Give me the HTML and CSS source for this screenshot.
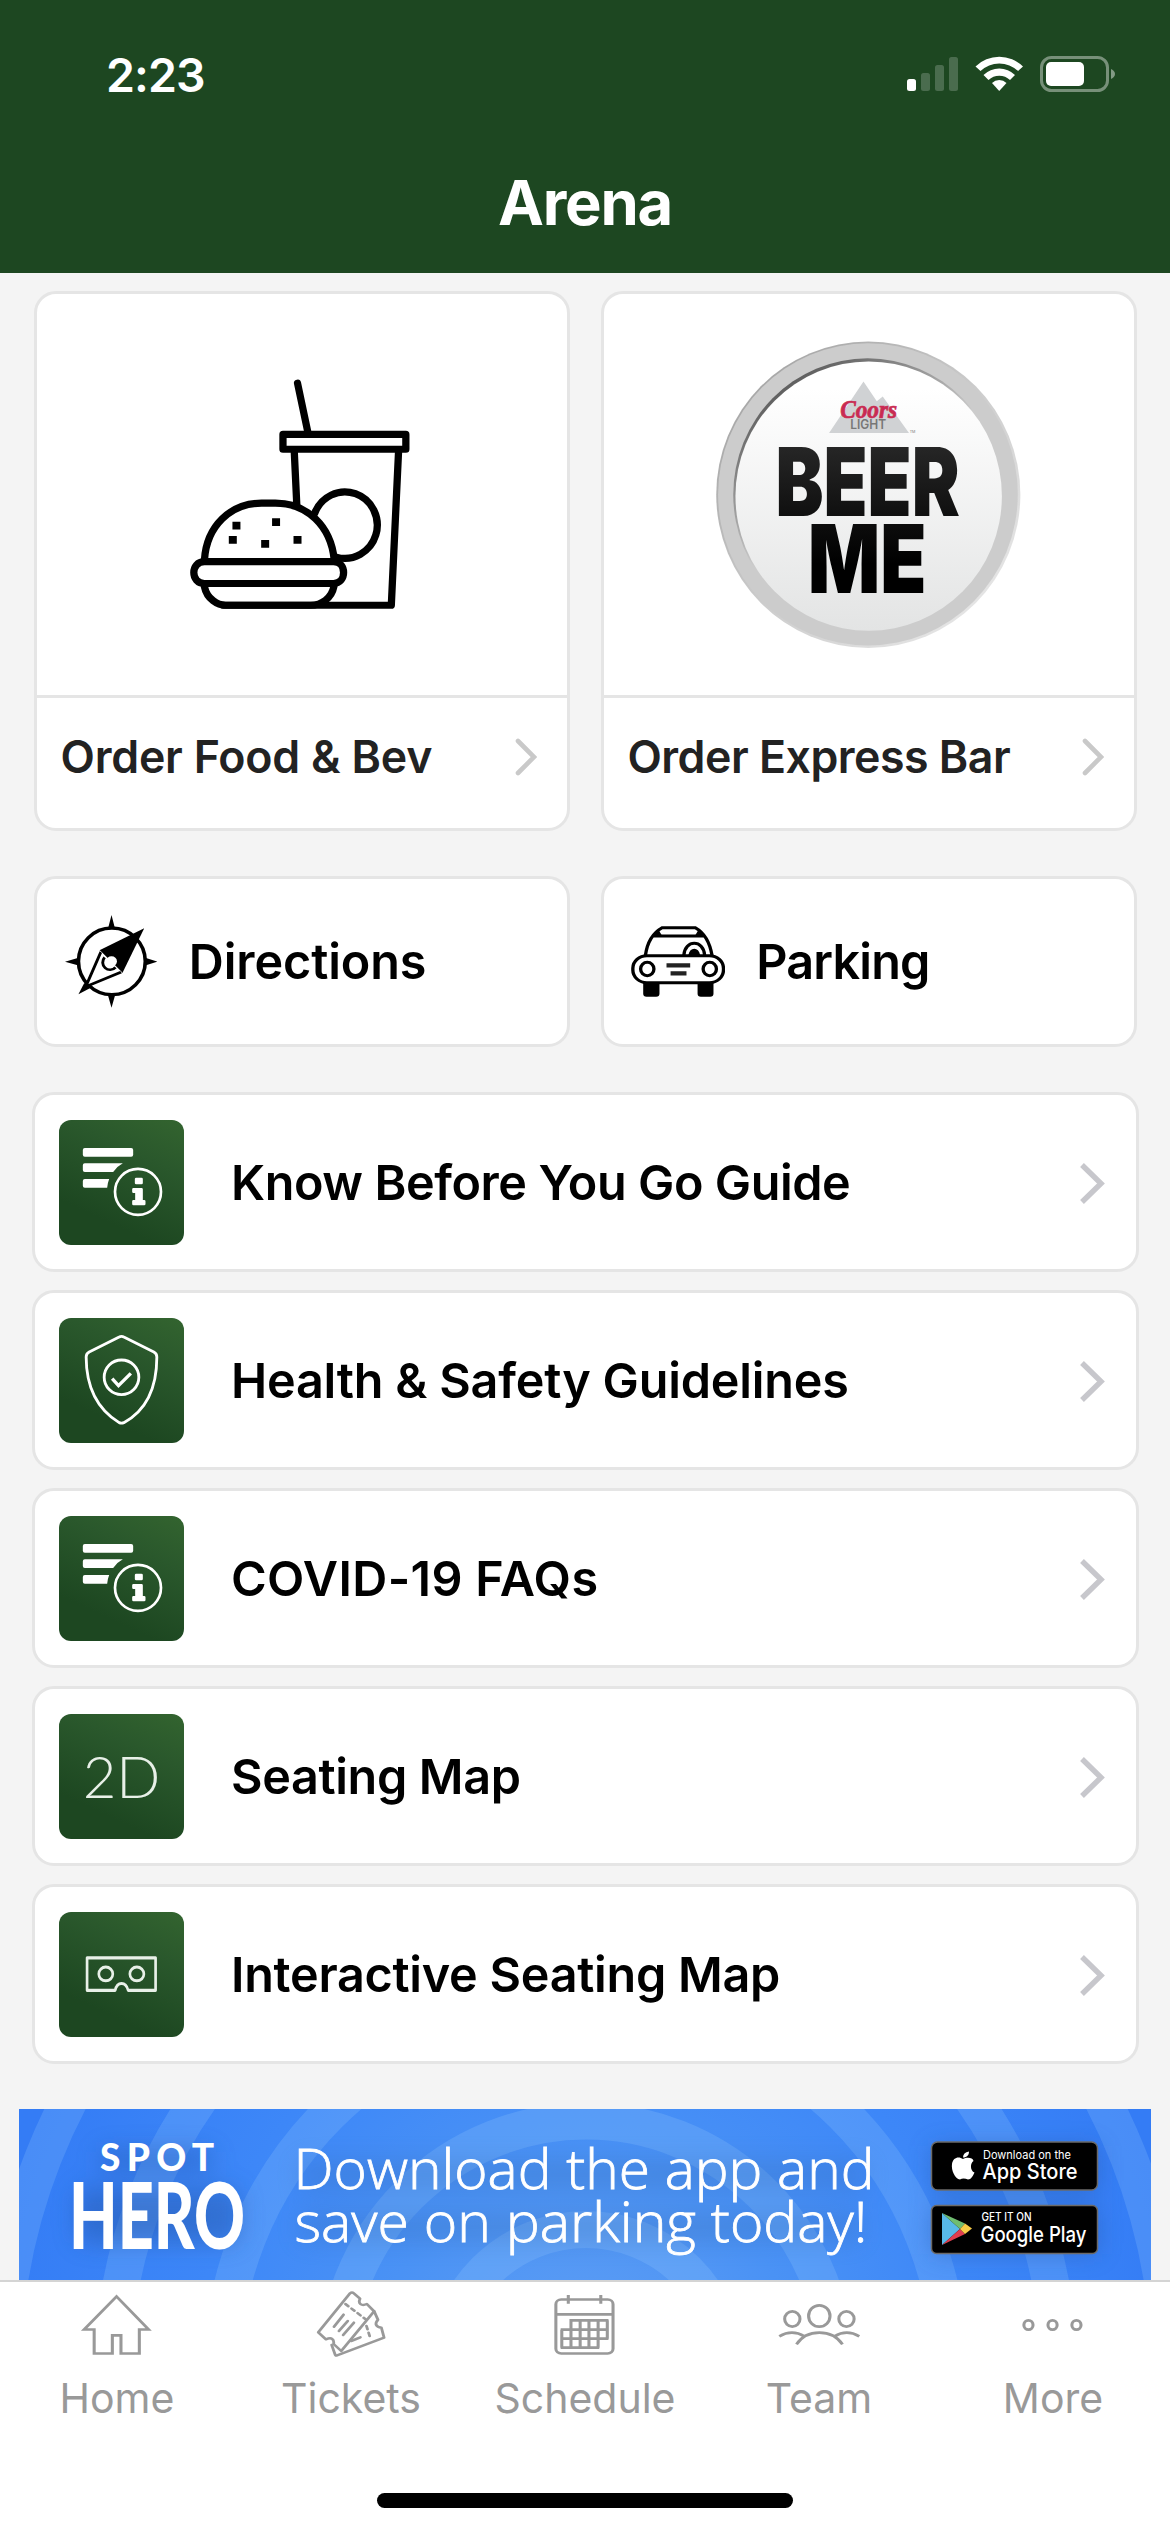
FILE: index.html
```html
<!DOCTYPE html>
<html lang="en">
<head>
<meta charset="utf-8">
<title>Arena</title>
<link rel="stylesheet" href="styles.css">
</head>
<body>
<svg class="defs" aria-hidden="true">
  <symbol id="chevron" viewBox="0 0 22 38"><path d="M3 3 L19 19 L3 35" fill="none" stroke="#c9c9c9" stroke-width="4.6" stroke-linecap="round" stroke-linejoin="miter"/></symbol>
  <symbol id="chevron-row" viewBox="0 0 25 41"><path d="M2 2 L21 20.500 L2 39" fill="none" stroke="#c7c7cc" stroke-width="5.4"/></symbol>
  <symbol id="info" viewBox="118 119 374 375">
    <g fill="#fff">
      <rect x="189" y="203" width="151" height="26" rx="6"/>
      <path d="M195 249H309Q292 258 280 275H195Q189 275 189 269V255Q189 249 195 249Z"/>
      <path d="M195 296H268Q263 309 262 322H195Q189 322 189 316V302Q189 296 195 296Z"/>
      <rect x="345" y="292" width="24" height="20" rx="4"/>
      <path d="M341 323H365Q369 323 369 327V359H373Q377 359 377 363V371Q377 375 373 375H341Q337 375 337 371V363Q337 359 341 359H346V338H341Q337 338 337 334V327Q337 323 341 323Z"/>
    </g>
    <circle cx="354.500" cy="334.500" r="69" fill="none" stroke="#fff" stroke-width="8"/>
  </symbol>
</svg>

<header class="header">
  <div class="status">
    <span class="time">2:23</span>
    <svg class="status-icons" viewBox="906 52 212 42">
      <g fill="#fff">
        <rect x="907" y="79" width="9" height="12" rx="2.500"/>
        <g opacity=".2"><rect x="921" y="73" width="9" height="18" rx="2.500"/><rect x="935" y="65" width="9" height="26" rx="2.500"/><rect x="949" y="57" width="9" height="34" rx="2.500"/></g>
        <path d="M975.500 66.500A34 34 0 0 1 1023 66.500L1018 71A27 27 0 0 0 980.500 71Z"/>
        <path d="M983.500 75A22.500 22.500 0 0 1 1015 75L1010 80A15.500 15.500 0 0 0 988.500 80Z"/>
        <path d="M992 83A10.500 10.500 0 0 1 1006.500 83L999.200 91Z"/>
        <rect x="1046" y="62" width="38" height="24" rx="5"/>
        <path opacity=".45" d="M1111 69Q1115 71 1115 74T1111 79Z"/>
      </g>
      <rect x="1041.500" y="57.500" width="66" height="33" rx="10" fill="none" stroke="#fff" stroke-opacity=".4" stroke-width="3"/>
    </svg>
  </div>
  <h1 class="title">Arena</h1>
</header>

<main class="content">
  <section class="pair">
    <a class="card">
      <div class="card-art">
        <svg class="food" viewBox="460 270 620 660" preserveAspectRatio="none" fill="none" stroke="#000" stroke-width="20" stroke-linecap="round" stroke-linejoin="round">
          <path d="M764 290L793 430"/>
          <path d="M724 433.500H1062V475H724Z"/>
          <path d="M755 480L762 630M1042 480L1022 912H560"/>
          <path d="M811 655A89 93 0 1 1 870 777"/>
          <path d="M508 785C514 690 580 626 665 626H703C790 626 856 690 865 785"/>
          <path d="M508 790H863C900 790 900 851 863 851H508C469 851 469 790 508 790Z"/>
          <path d="M508 860C515 895 545 912 566 912H800C830 912 858 892 864 860"/>
          <g fill="#000" stroke="none"><path d="M585 678h22v22h-22zM694 668h22v22h-22zM575 718h22v22h-22zM664 729h22v22h-22zM753 718h22v22h-22z"/></g>
        </svg>
      </div>
      <div class="card-label"><span class="order-food">Order Food &amp; Bev</span><svg class="chevron"><use href="#chevron"/></svg></div>
    </a>
    <a class="card">
      <div class="card-art">
        <svg class="beer" viewBox="336 164 834 872" preserveAspectRatio="none">
          <defs>
            <linearGradient id="face" x1="0" y1="0" x2="0" y2="1"><stop offset=".1" stop-color="#fff"/><stop offset="1" stop-color="#e3e4e4"/></linearGradient>
            <linearGradient id="edge" x1="0" y1="0" x2=".7" y2="1"><stop offset="0" stop-color="#333"/><stop offset=".55" stop-color="#ccc"/></linearGradient>
            <linearGradient id="rim" x1="0" y1="0" x2="1" y2="1"><stop offset="0" stop-color="#999"/><stop offset=".5" stop-color="#ccc"/><stop offset="1" stop-color="#eee"/></linearGradient>
            <linearGradient id="ink" gradientUnits="userSpaceOnUse" x1="0" y1="466" x2="0" y2="875"><stop offset="0" stop-color="#262626"/><stop offset=".8" stop-color="#000"/></linearGradient>
          </defs>
          <ellipse cx="753" cy="600" rx="411" ry="429" fill="url(#rim)"/>
          <ellipse cx="752" cy="599" rx="405" ry="423" fill="#ccc"/>
          <ellipse cx="751" cy="600" rx="363" ry="382" fill="url(#edge)"/>
          <ellipse cx="754" cy="604" rx="360" ry="377" fill="url(#face)"/>
          <path d="M647 427L740 283L776 338L792 325L863 427Z" fill="#d0d2d4"/>
          <text class="script" x="677" y="386" font-size="72" textLength="154" lengthAdjust="spacingAndGlyphs" fill="#c92b52" stroke="#c92b52" stroke-width="2">Coors</text>
          <text class="sans" x="704" y="417" font-size="35" font-weight="600" textLength="97" lengthAdjust="spacingAndGlyphs" fill="#777">LIGHT</text>
          <text class="sans" x="865" y="428" font-size="10" fill="#777">TM</text>
          <text class="sans" x="502" y="661" font-size="267" font-weight="900" textLength="498" lengthAdjust="spacingAndGlyphs" fill="url(#ink)">BEER</text>
          <text class="sans" x="590" y="875" font-size="267" font-weight="900" textLength="320" lengthAdjust="spacingAndGlyphs" fill="url(#ink)">ME</text>
        </svg>
      </div>
      <div class="card-label"><span class="order-bar">Order Express Bar</span><svg class="chevron"><use href="#chevron"/></svg></div>
    </a>
  </section>

  <section class="pair">
    <a class="quick">
      <svg class="compass" viewBox="123 170 254 278" preserveAspectRatio="none">
        <ellipse cx="252" cy="309" rx="92" ry="100" fill="none" stroke="#000" stroke-width="10"/>
        <path d="M251 170L260 208H242ZM251 448L241 410H261ZM123 310L158 299V321ZM377 310L346 299V321Z"/>
        <path d="M341 210L281 344L218 276Z"/>
        <path d="M222 280L180 385L278 341" fill="#fff" stroke="#000" stroke-width="8"/>
        <path d="M160 408L176 374L194 388Z"/>
        <path d="M218 276L281 344" stroke="#fff" stroke-width="2"/>
        <circle cx="251" cy="309" r="15" fill="#fff"/>
        <path d="M232 297A20 22 0 0 0 262 327" fill="none" stroke="#000" stroke-width="8"/>
      </svg>
      <span class="directions">Directions</span>
    </a>
    <a class="quick">
      <svg class="car" viewBox="110 200 256 218" preserveAspectRatio="none" fill="none" stroke="#000" stroke-width="9">
        <path d="M149 291C153 258 167 225 194 208H284C311 225 324 258 329 291M170 233H307" />
        <path d="M172 231L184 218L190 229ZM305 231L293 218L287 229Z" fill="#000" stroke-width="4"/>
        <rect x="115" y="292" width="245" height="81" rx="38"/>
        <ellipse cx="154" cy="332" rx="18" ry="20"/><ellipse cx="323" cy="332" rx="18" ry="20"/>
        <path d="M253 290C256 243 306 243 309 290"/>
        <path d="M265 290Q269 271 281 271T297 290Z" fill="#000" stroke="none"/>
        <path d="M206 321H270M217 345H260" stroke="#222" stroke-width="13"/>
        <path d="M143 374H187V406Q187 415 178 415H152Q143 415 143 406ZM290 374H333V406Q333 415 324 415H299Q290 415 290 406Z" fill="#000" stroke="none"/>
      </svg>
      <span class="parking">Parking</span>
    </a>
  </section>

  <nav class="list">
    <a class="row"><span class="tile"><svg><use href="#info"/></svg></span><span class="row-text know">Know Before You Go Guide</span><svg class="chevron"><use href="#chevron-row"/></svg></a>
    <a class="row"><span class="tile"><svg viewBox="118 713 374 375" fill="none" stroke="#fff" stroke-width="8.500" stroke-linecap="round" stroke-linejoin="round"><path d="M298 770Q305 766 312 770L402 815Q411 820 411 830C411 920 380 990 312 1027Q305 1030 298 1027C230 985 199 920 199 830Q199 820 208 815Z"/><circle cx="305" cy="891" r="52"/><path d="M277 895L296 916L333 879" stroke-width="10" stroke-linecap="butt" stroke-linejoin="miter"/></svg></span><span class="row-text health">Health &amp; Safety Guidelines</span><svg class="chevron"><use href="#chevron-row"/></svg></a>
    <a class="row"><span class="tile"><svg><use href="#info"/></svg></span><span class="row-text covid">COVID-19 FAQs</span><svg class="chevron"><use href="#chevron-row"/></svg></a>
    <a class="row"><span class="tile two-d">2D</span><span class="row-text seating">Seating Map</span><svg class="chevron"><use href="#chevron-row"/></svg></a>
    <a class="row"><span class="tile"><svg viewBox="118 1128 374 327" preserveAspectRatio="none" fill="none" stroke="#e8f0e8" stroke-width="8" stroke-linejoin="round"><path d="M202 1248H407V1333H325C318 1309 292 1309 286 1333H202Z"/><ellipse cx="258" cy="1290" rx="21" ry="18"/><ellipse cx="351" cy="1290" rx="21" ry="18"/></svg></span><span class="row-text interactive">Interactive Seating Map</span><svg class="chevron"><use href="#chevron-row"/></svg></a>
  </nav>

  <svg class="banner" viewBox="19 2109 1132 171">
    <defs>
      <radialGradient id="sky" gradientUnits="userSpaceOnUse" cx="586" cy="2371" r="600"><stop offset="0" stop-color="#609ff4"/><stop offset=".35" stop-color="#4a92f5"/><stop offset=".65" stop-color="#3d87f8"/><stop offset="1" stop-color="#347cf5"/></radialGradient>
      <filter id="soft" x="-30%" y="-40%" width="160%" height="180%"><feGaussianBlur stdDeviation="12"/></filter>
    </defs>
    <rect x="19" y="2109" width="1132" height="171" fill="url(#sky)"/>
    <g fill="none" stroke="#a0d0ff" stroke-opacity=".2" stroke-width="37"><circle cx="586" cy="2371.600" r="142"/><circle cx="586" cy="2371.600" r="250.500"/><circle cx="586" cy="2371.600" r="364"/><circle cx="586" cy="2371.600" r="473"/><circle cx="586" cy="2371.600" r="583.500"/></g>
    <g fill="#204f9c" opacity=".4" filter="url(#soft)"><rect x="76" y="2188" width="164" height="56" rx="10"/><rect x="100" y="2150" width="112" height="20"/><rect x="932" y="2146" width="166" height="46"/><rect x="932" y="2208" width="166" height="46"/></g>
    <g fill="#315f9f" opacity=".22" filter="url(#soft)"><rect x="300" y="2160" width="566" height="30"/><rect x="300" y="2212" width="560" height="30"/></g>
    <g fill="#fff">
      <text class="heavy" x="100" y="2171" font-size="37" textLength="114" lengthAdjust="spacing">SPOT</text>
      <text class="heavy" x="69" y="2249" font-size="91" textLength="176" lengthAdjust="spacingAndGlyphs">HERO</text>
      <g stroke="#fff" stroke-width=".8">
        <text class="light" x="293.500" y="2188.700" font-size="55" textLength="581" lengthAdjust="spacingAndGlyphs">Download the app and</text>
        <text class="light" x="294.500" y="2241.700" font-size="55" textLength="573" lengthAdjust="spacingAndGlyphs">save on parking today!</text>
      </g>
    </g>
    <rect x="931.500" y="2142" width="166" height="48" rx="6" stroke="#6b6a68" stroke-width="1.500"/>
    <rect x="931.500" y="2205.500" width="166" height="48" rx="5" stroke="#6b6a68" stroke-width="1.500"/>
    <path fill="#fff" d="M963 2159C966 2157 973 2157 973.500 2161C970 2163 970 2171 974.500 2172.500C973 2176 971 2179.500 968 2179.500C965 2178 962 2178 960 2179.500C955 2179 951 2170 952 2164C953 2157 959 2156 963 2159ZM963 2157.500C963 2154 965 2152 969 2151.500C969 2155 967 2157.500 963 2157.500Z"/>
    <path fill="#58b9e8" d="M942 2213V2245L960 2229Z"/><path fill="#70bd71" d="M942 2213L965 2223.500L960 2229Z"/><path fill="#df3e50" d="M942 2245L965 2234L960 2229Z"/><path fill="#f8cb46" d="M965 2223.500L972 2228.500L965 2234L960 2229Z"/>
    <g class="sans" fill="#fff">
      <text x="983" y="2159" font-size="11.500" textLength="88" lengthAdjust="spacingAndGlyphs">Download on the</text>
      <text x="982.500" y="2178.500" font-size="21" font-weight="500" textLength="95" lengthAdjust="spacingAndGlyphs">App Store</text>
      <text x="981.500" y="2220.500" font-size="11.500" font-weight="500" textLength="50" lengthAdjust="spacingAndGlyphs">GET IT ON</text>
      <text x="980.500" y="2242" font-size="22" font-weight="500" textLength="106" lengthAdjust="spacingAndGlyphs">Google Play</text>
    </g>
  </svg>
</main>

<footer class="tabs">
  <nav class="tab-row">
    <a class="tab"><svg width="73.500" height="68" viewBox="210 60 192 204" preserveAspectRatio="none" stroke-width="8"><path d="M305.500 79.500L389 178.500H365V250.500H317V196H294.500V250.500H247V178.500H221Z"/></svg><span>Home</span></a>
    <a class="tab"><svg width="70.400" height="68" viewBox="825 60 184 204" preserveAspectRatio="none" stroke-width="7.500" stroke-linejoin="round" stroke-linecap="round"><path d="M914 70Q919 65 924 70L940 86C934 101 944 109 958 102L977 124L891 243L871 222C873 207 866 201 851 208L831 187Z"/><path d="M977 124L987 149C977 162 982 171 996 173L1003 203L880 256Q876 258 875 254L866 225M917 213L941 202"/><path d="M902 102L955 148M957 168L968 208" stroke-dasharray="10 11"/><path d="M897 134L872 170M908 153L885 183M924 158L896 195"/></svg><span>Tickets</span></a>
    <a class="tab"><svg width="63.100" height="68" viewBox="-43 60 165 204" preserveAspectRatio="none" stroke-width="8"><rect x="-35.500" y="88.500" width="149.500" height="162" rx="14"/><path d="M-35 133H114M-3 75V101M82 75V101M0 151H102M-23 179H102M-23 206H102M-23 233H78M-20 179V233M4 151V233M28 151V233M51 151V233M75 151V233M99 151V206"/></svg><span>Schedule</span></a>
    <a class="tab"><svg width="84.600" height="68" viewBox="540 60 221 204" preserveAspectRatio="none" stroke-width="8"><ellipse cx="650.500" cy="138" rx="28" ry="32"/><ellipse cx="580" cy="147" rx="20" ry="23"/><ellipse cx="721.500" cy="147" rx="20" ry="23"/><path d="M591 223C618 176 683 176 711 223M546 199Q579 177 612 199M755 199Q722 177 690 199"/></svg><span>Team</span></a>
    <a class="tab"><svg width="63.100" height="68" viewBox="1180 60 165 204" preserveAspectRatio="none" stroke-width="8"><ellipse cx="1199.500" cy="165" rx="12" ry="14"/><ellipse cx="1262.500" cy="165" rx="12" ry="14"/><ellipse cx="1325" cy="165" rx="12" ry="14"/></svg><span>More</span></a>
  </nav>
  <div class="home-indicator"></div>
</footer>
</body>
</html>
```

FILE: styles.css
```css
* { box-sizing: border-box; }
body { margin: 0; width: 1170px; height: 2532px; overflow: hidden; background: #f4f4f4; font-family: Inter, "Liberation Sans", sans-serif; color: #000; display: flex; flex-direction: column; }
svg { display: block; flex: none; }
.defs { position: absolute; width: 0; height: 0; }

.header { height: 273px; flex: none; background: #1d4721; color: #fff; }
.status { height: 146px; padding: 52px 52px 0 106px; display: flex; justify-content: space-between; align-items: flex-start; }
.time { font-size: 46.500px; font-weight: 600; line-height: 46px; letter-spacing: -.9px; }
.status-icons { width: 212px; height: 42px; }
.title { margin: 0; text-align: center; font-size: 61.500px; font-weight: 700; line-height: 114px; letter-spacing: -1.200px; }

.content { flex: none; height: 2007px; padding-top: 18px; display: flex; flex-direction: column; }
.pair { display: grid; grid-template-columns: 1fr 1fr; gap: 31px; padding: 0 33.500px; margin-bottom: 45px; }
.card, .quick, .row { background: #fff; border: 3px solid #e5e5e5; border-radius: 22px; display: flex; }
.card { height: 540px; flex-direction: column; }
.card-art { height: 404px; border-bottom: 3px solid #e5e5e5; display: flex; justify-content: center; }
.food { width: 225.400px; height: 235.700px; margin-top: 82.400px; margin-right: 3.400px; }
.beer { width: 308.600px; height: 311.400px; margin-top: 44.500px; }
.card-label { display: flex; justify-content: space-between; padding: 35px 30px 0 24px; font-size: 44.700px; line-height: 48px; font-weight: 600; color: #222; white-space: nowrap; }
.chevron { width: 22px; height: 38px; margin-top: 5px; }
.order-food { letter-spacing: -.2px; }
.order-bar { letter-spacing: -.5px; }
.quick { height: 171px; align-items: center; font-size: 48.500px; font-weight: 600; }
.compass { width: 92.300px; height: 92.700px; margin-left: 28px; margin-right: 32px; }
.car { width: 94.700px; height: 72.700px; margin-left: 27px; margin-right: 31px; }
.directions { letter-spacing: -.1px; }
.parking { letter-spacing: -.8px; }
.list { display: flex; flex-direction: column; gap: 18px; padding: 0 31px 0 32px; }
.row { height: 180px; align-items: center; padding: 0 31px 0 24px; }
.row .chevron { width: 25px; height: 41px; margin: 2px 0 0; }
.tile { flex: none; width: 125px; height: 125px; border-radius: 12px; overflow: hidden; background: linear-gradient(25deg, #1d4721 25%, #2a582c 70%, #33642f 100%); }
.tile svg { width: 125px; height: 125px; }
.two-d { color: #e8f0e8; font: 300 58px/123px Lato, sans-serif; text-align: center; }
.row-text { flex: 1; margin-left: 47px; font-size: 48.500px; font-weight: 600; white-space: nowrap; }
.know { letter-spacing: -.42px; }
.health { letter-spacing: -.2px; }
.covid { letter-spacing: .35px; }
.seating { letter-spacing: -.35px; }
.interactive { letter-spacing: -.26px; }
.banner { width: 1132px; height: 171px; margin: 45px 19px 0; }
.script { font-family: "Liberation Serif", serif; font-style: italic; font-weight: 700; }
.sans { font-family: Inter, sans-serif; }
.heavy { font-family: Lato, sans-serif; font-weight: 900; }
.light { font-family: "Open Sans", sans-serif; font-weight: 300; }

.tabs { height: 252px; flex: none; background: #fff; border-top: 2px solid #d4d4d4; }
.tab-row { display: grid; grid-template-columns: repeat(5, 1fr); height: 211px; padding-top: 8px; }
.tab { display: flex; flex-direction: column; align-items: center; color: #999; font-size: 41px; line-height: 50px; }
.tab svg { fill: none; stroke: #999; margin-bottom: 15px; }
.home-indicator { width: 416px; height: 15px; border-radius: 8px; background: #000; margin: 0 auto; }
```
